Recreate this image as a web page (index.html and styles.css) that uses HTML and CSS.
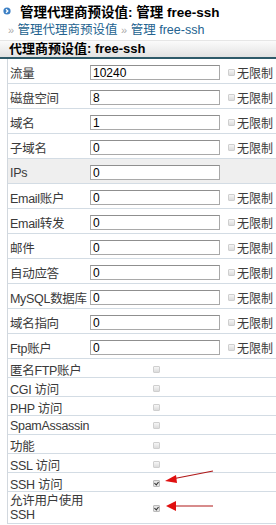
FILE: index.html
```html
<!DOCTYPE html>
<html lang="zh-CN">
<head>
    <meta charset="UTF-8">
    <title>管理代理商预设值: 管理 free-ssh</title>
    <link rel="stylesheet" href="styles.css">
</head>
<body>
    <h1 class="title">
        <svg class="bullet" width="8" height="8" viewBox="0 0 8 8"><circle cx="4" cy="4" r="3.6" fill="#3b7fc4"/><path d="M3 2.3 L4.8 4 L3 5.7" stroke="#fff" stroke-width="1.3" fill="none"/></svg>
        管理代理商预设值: 管理 free-ssh
    </h1>
    <div class="crumbs">
        <span class="sep">»</span> <a href="#">管理代理商预设值</a> <span class="sep">»</span> <a href="#">管理 free-ssh</a>
    </div>

    <div class="panel">
        <div class="panel-head">代理商预设值: free-ssh</div>
        <div class="rows">
            <div class="row"><span class="label">流量</span><input value="10240"><span class="unl"><i class="cb"></i>无限制</span></div>
            <div class="row"><span class="label">磁盘空间</span><input value="8"><span class="unl"><i class="cb"></i>无限制</span></div>
            <div class="row"><span class="label">域名</span><input value="1"><span class="unl"><i class="cb"></i>无限制</span></div>
            <div class="row"><span class="label">子域名</span><input value="0"><span class="unl"><i class="cb"></i>无限制</span></div>
            <div class="row grey"><span class="label ips">IPs</span><input value="0"><span class="unl"></span></div>
            <div class="row"><span class="label">Email账户</span><input value="0"><span class="unl"><i class="cb"></i>无限制</span></div>
            <div class="row"><span class="label">Email转发</span><input value="0"><span class="unl"><i class="cb"></i>无限制</span></div>
            <div class="row"><span class="label">邮件</span><input value="0"><span class="unl"><i class="cb"></i>无限制</span></div>
            <div class="row"><span class="label">自动应答</span><input value="0"><span class="unl"><i class="cb"></i>无限制</span></div>
            <div class="row"><span class="label">MySQL数据库</span><input value="0"><span class="unl"><i class="cb"></i>无限制</span></div>
            <div class="row"><span class="label">域名指向</span><input value="0"><span class="unl"><i class="cb"></i>无限制</span></div>
            <div class="row"><span class="label">Ftp账户</span><input value="0"><span class="unl"><i class="cb"></i>无限制</span></div>

            <div class="row check"><span class="label">匿名FTP账户</span><span class="mid"><i class="cb"></i></span></div>
            <div class="row check"><span class="label">CGI 访问</span><span class="mid"><i class="cb"></i></span></div>
            <div class="row check"><span class="label">PHP 访问</span><span class="mid"><i class="cb"></i></span></div>
            <div class="row check"><span class="label">SpamAssassin</span><span class="mid"><i class="cb"></i></span></div>
            <div class="row check"><span class="label">功能</span><span class="mid"><i class="cb"></i></span></div>
            <div class="row check"><span class="label">SSL 访问</span><span class="mid"><i class="cb"></i></span></div>
            <div class="row check"><span class="label">SSH 访问</span><span class="mid"><i class="cb on"></i></span></div>
            <div class="row check tall"><span class="label">允许用户使用<br>SSH</span><span class="mid"><i class="cb on"></i></span></div>
        </div>
    </div>

    <!-- red arrows drawn over the screenshot -->
    <svg class="arrows" width="276" height="525" viewBox="0 0 276 525">
        <path d="M213 471 L172 479" stroke="#b01818" stroke-width="1.2" fill="none"/>
        <path d="M165 481 L176 475 L177 483 Z" fill="#e01010"/>
        <path d="M213 506 L172 506" stroke="#b01818" stroke-width="1.2" fill="none"/>
        <path d="M166 506 L176 501 L176 511 Z" fill="#e01010"/>
    </svg>
</body>
</html>
```

FILE: styles.css
```css
body { margin: 0; font-family: "Liberation Sans", "Noto Sans CJK SC", sans-serif; font-size: 12.5px; color: #3a3a3a; position: relative; width: 276px; height: 525px; overflow: hidden; }
.title { margin: 0; height: 21px; display: flex; align-items: center; gap: 9px; padding-left: 3px; font-size: 13.5px; font-weight: bold; color: #000; }
.bullet { flex: none; }
.crumbs { height: 19px; line-height: 19px; padding-left: 8px; font-size: 12.5px; }
.crumbs a { color: #23638f; text-decoration: none; }
.crumbs .sep { color: #aaa; font-size: 11px; }
.panel-head { height: 16px; line-height: 16px; padding-left: 9px; font-weight: bold; font-size: 13px; color: #000; background: linear-gradient(#fbfbfb, #e2e2e2); border-top: 1px solid #e6e6e6; border-bottom: 2px solid #2e5a69; }
.rows { margin-left: 7px; border-left: 1px solid #d2d8de; }
.row { display: grid; grid-template-columns: 82px 132px 1fr; align-items: center; height: 25px; box-sizing: border-box; padding-top: 3px; border-bottom: 1px solid #d3dce4; }
.row.grey { background: #efefef; }
.label { padding-left: 2px; white-space: nowrap; letter-spacing: -0.3px; }
.row input { width: 130px; height: 15px; box-sizing: border-box; margin: 0; padding: 0 2px; border: 1px solid #a9a9a9; border-top-color: #8f8f8f; font: 12px "Liberation Sans", sans-serif; color: #000; background: #fff; }
.unl { display: flex; align-items: center; gap: 2px; padding-left: 6px; font-size: 12px; }
.cb { display: inline-block; width: 5px; height: 5px; border: 1px solid #cfcfcf; border-radius: 1px; background: linear-gradient(#f6f6f6, #dcdcdc); }
.cb.on { background: #e4e4e4; border-color: #bbb; position: relative; }
.cb.on::after { content: ""; position: absolute; left: 1px; top: 0; width: 2px; height: 3px; border: solid #333; border-width: 0 1px 1px 0; transform: rotate(40deg); }
.row.check { height: 19px; padding-top: 1px; }
.row.check.tall { height: 32px; line-height: 14px; }
.mid { grid-column: 2; text-align: center; display: flex; justify-content: center; }
.arrows { position: absolute; left: 0; top: 0; pointer-events: none; }
```
